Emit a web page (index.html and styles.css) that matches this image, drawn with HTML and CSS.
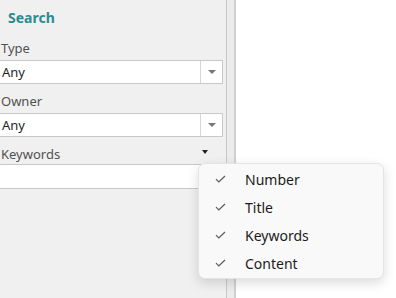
FILE: index.html
```html
<!DOCTYPE html>
<html lang="en">
<head>
  <meta charset="UTF-8" />
  <title>Search</title>
  <link rel="stylesheet" href="styles.css">
</head>
<body>
  <div class="layout">
    <!-- Search side panel -->
    <aside class="panel">
      <h2 class="panel-title">Search</h2>
      <label class="field-label">Type</label>
      <div class="combo">
        <span class="combo-value">Any</span>
        <span class="combo-btn"><span class="arrow"></span></span>
      </div>
      <label class="field-label">Owner</label>
      <div class="combo">
        <span class="combo-value">Any</span>
        <span class="combo-btn"><span class="arrow"></span></span>
      </div>
      <div class="field-row">
        <label class="field-label">Keywords</label>
        <span class="arrow arrow-dark"></span>
      </div>
      <div class="textbox"></div>
    </aside>
    <!-- Splitter -->
    <div class="splitter"></div>
    <!-- Results area -->
    <main class="content"></main>
  </div>

  <!-- Keyword scope menu -->
  <ul class="menu">
    <li><span class="check"><svg width="11" height="8" viewBox="0 0 11 8"><path d="M1 4.2 L3.8 7 L10 1" fill="none" stroke="#5a5a5a" stroke-width="1.2"/></svg></span>Number</li>
    <li><span class="check"><svg width="11" height="8" viewBox="0 0 11 8"><path d="M1 4.2 L3.8 7 L10 1" fill="none" stroke="#5a5a5a" stroke-width="1.2"/></svg></span>Title</li>
    <li><span class="check"><svg width="11" height="8" viewBox="0 0 11 8"><path d="M1 4.2 L3.8 7 L10 1" fill="none" stroke="#5a5a5a" stroke-width="1.2"/></svg></span>Keywords</li>
    <li><span class="check"><svg width="11" height="8" viewBox="0 0 11 8"><path d="M1 4.2 L3.8 7 L10 1" fill="none" stroke="#5a5a5a" stroke-width="1.2"/></svg></span>Content</li>
  </ul>
</body>
</html>
```

FILE: styles.css
```css
html, body { height: 100%; margin: 0; padding: 0; }
body {
  font-family: "Noto Sans", "Open Sans", sans-serif;
  font-size: 13px;
  color: #222;
  background: #fff;
  position: relative;
  overflow: hidden;
}
.layout { display: grid; grid-template-columns: 226px 10px 1fr; height: 100%; }
/* Side panel */
.panel { background: #f0f0f0; display: flex; flex-direction: column; padding-top: 8px; }
.panel-title {
  margin: 0 0 12px 8px;
  font-size: 14px;
  font-weight: 700;
  color: #2b8c8f;
  line-height: 20px;
}
.field-label { color: #505050; line-height: 17px; padding-left: 1px; display: block; }
.field-row { display: flex; justify-content: space-between; align-items: center; width: 208px; }
.combo {
  display: flex;
  height: 22px;
  width: 222px;
  margin: 3px 0 9px -1px;
  background: #fff;
  border: 1px solid #c9c9c9;
}
.combo-value { flex: 1; line-height: 22px; padding-left: 2px; color: #1e1e1e; }
.combo-btn {
  width: 21px;
  border-left: 1px solid #d6d6d6;
  display: flex;
  align-items: center;
  justify-content: center;
}
.arrow {
  width: 0; height: 0;
  border-left: 4px solid transparent;
  border-right: 4px solid transparent;
  border-top: 4px solid #777;
}
.arrow-dark { border-top-color: #222; border-left-width: 3px; border-right-width: 3px; margin-top: -6px; }
.textbox {
  height: 23px;
  margin: 1px 0 0 -1px;
  width: 222px;
  background: #fff;
  border: 1px solid #c9c9c9;
}
/* Splitter */
.splitter {
  background: #ececec;
  border-left: 1px solid #c8c8c8;
  border-right: 2px solid #d0d0d0;
}
.content { background: #fff; }
/* Popup menu */
.menu {
  position: absolute;
  left: 198px;
  top: 163px;
  width: 184px;
  margin: 0;
  padding: 1px 0;
  list-style: none;
  background: #f9f9f9;
  border: 1px solid #e4e4e4;
  border-radius: 7px;
  box-shadow: 0 4px 12px rgba(0, 0, 0, 0.14);
  font-size: 14px;
  color: #1b1b1b;
}
.menu li { display: flex; align-items: center; height: 28px; }
.check { width: 46px; padding-left: 16px; box-sizing: border-box; display: flex; }
```
